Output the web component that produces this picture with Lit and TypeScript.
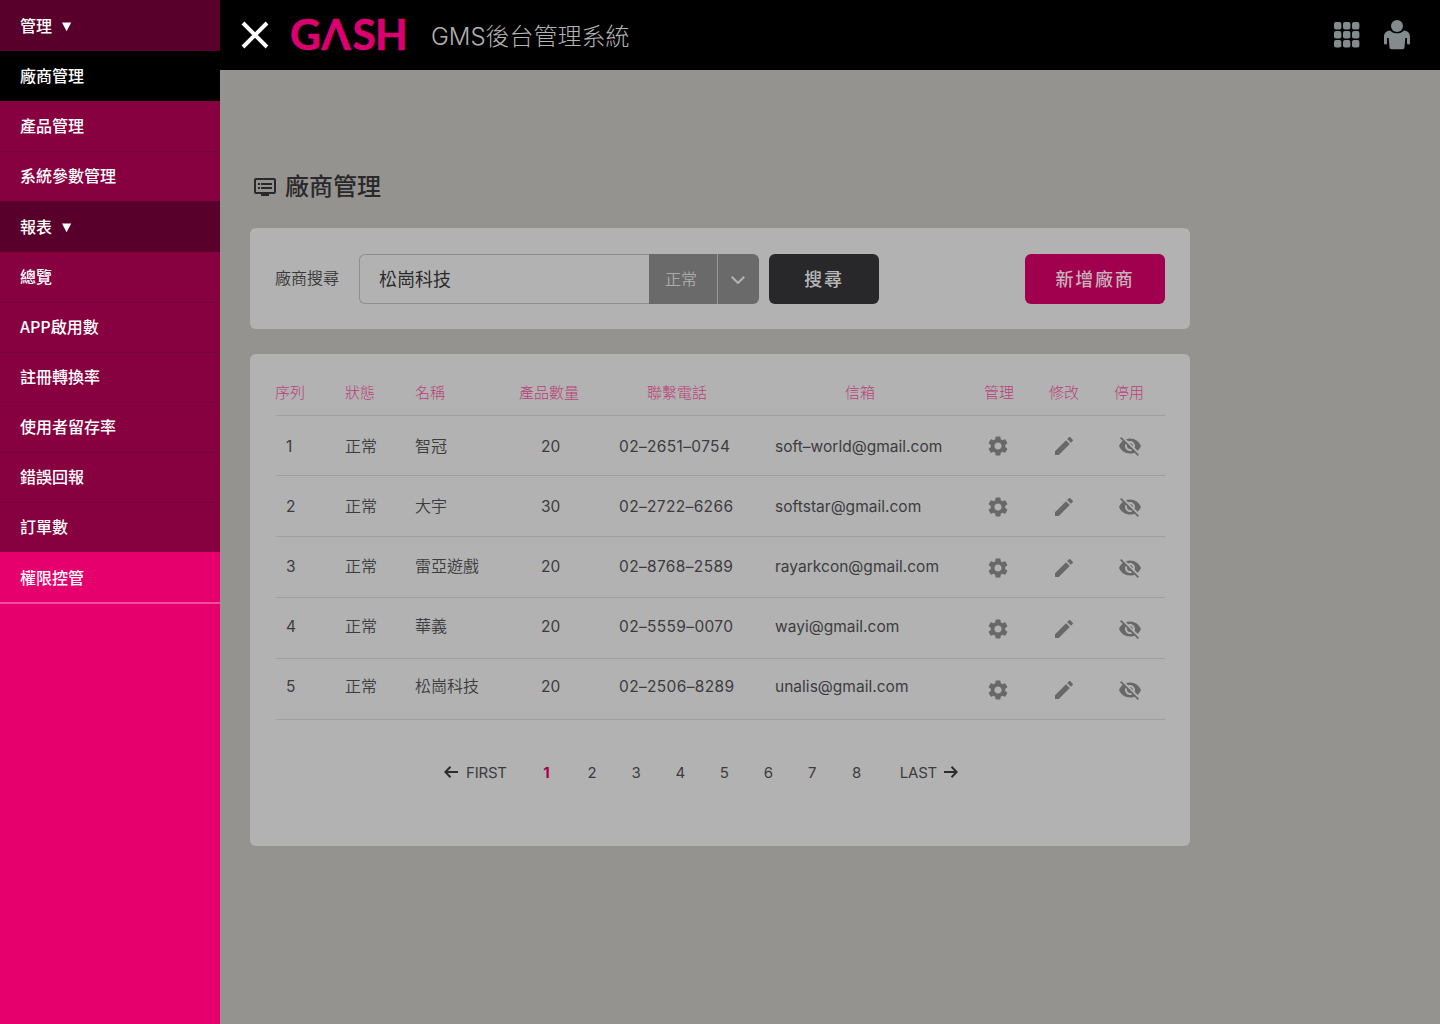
import { LitElement, html, css, svg } from "lit";
import { customElement } from "lit/decorators.js";
import { classMap } from "lit/directives/class-map.js";

const GEAR = "M19.14 12.94c.04-.3.06-.61.06-.94 0-.32-.02-.64-.07-.94l2.03-1.58a.49.49 0 0 0 .12-.61l-1.92-3.32a.488.488 0 0 0-.59-.22l-2.39.96c-.5-.38-1.03-.7-1.62-.94l-.36-2.54a.484.484 0 0 0-.48-.41h-3.84c-.24 0-.43.17-.47.41l-.36 2.54c-.59.24-1.13.57-1.62.94l-2.39-.96c-.22-.08-.47 0-.59.22L2.74 8.87c-.12.21-.08.47.12.61l2.03 1.58c-.05.3-.09.63-.09.94s.02.64.07.94l-2.03 1.58a.49.49 0 0 0-.12.61l1.92 3.32c.12.22.37.29.59.22l2.39-.96c.5.38 1.03.7 1.62.94l.36 2.54c.05.24.24.41.48.41h3.84c.24 0 .44-.17.47-.41l.36-2.54c.59-.24 1.13-.56 1.62-.94l2.39.96c.22.08.47 0 .59-.22l1.92-3.32c.12-.22.07-.47-.12-.61l-2.01-1.58zM12 15.6c-1.98 0-3.6-1.62-3.6-3.6s1.62-3.6 3.6-3.6 3.6 1.62 3.6 3.6-1.62 3.6-3.6 3.6z";
const PENCIL = "M3 17.25V21h3.75L17.81 9.94l-3.75-3.75L3 17.25zM20.71 7.04a.996.996 0 0 0 0-1.41l-2.34-2.34a.996.996 0 0 0-1.41 0l-1.83 1.83 3.75 3.75 1.83-1.83z";
const EYE_OFF = "M12 7c2.76 0 5 2.24 5 5 0 .65-.13 1.26-.36 1.83l2.92 2.92c1.51-1.26 2.7-2.89 3.43-4.75-1.73-4.39-6-7.5-11-7.5-1.4 0-2.74.25-3.98.7l2.16 2.16C10.74 7.13 11.35 7 12 7zM2 4.27l2.28 2.28.46.46C3.08 8.3 1.78 10.02 1 12c1.73 4.39 6 7.5 11 7.5 1.55 0 3.03-.3 4.38-.84l.42.42L19.73 22 21 20.73 3.27 3 2 4.27zM7.53 9.8l1.55 1.55c-.05.21-.08.43-.08.65 0 1.66 1.34 3 3 3 .22 0 .44-.03.65-.08l1.55 1.55c-.67.33-1.41.53-2.2.53-2.76 0-5-2.24-5-5 0-.79.2-1.53.53-2.2zm4.31-.78l3.15 3.15.02-.16c0-1.66-1.34-3-3-3l-.17.01z";

const MENU = [
  { label: "管理", kind: "head" },
  { label: "廠商管理", kind: "active" },
  { label: "產品管理", kind: "sub" },
  { label: "系統參數管理", kind: "sub" },
  { label: "報表", kind: "head" },
  { label: "總覽", kind: "sub" },
  { label: "APP啟用數", kind: "sub" },
  { label: "註冊轉換率", kind: "sub" },
  { label: "使用者留存率", kind: "sub" },
  { label: "錯誤回報", kind: "sub" },
  { label: "訂單數", kind: "sub" },
  { label: "權限控管", kind: "root" },
];

const ROWS = [
  ["1", "正常", "智冠", "20", "02–2651–0754", "soft–world@gmail.com"],
  ["2", "正常", "大宇", "30", "02–2722–6266", "softstar@gmail.com"],
  ["3", "正常", "雷亞遊戲", "20", "02–8768–2589", "rayarkcon@gmail.com"],
  ["4", "正常", "華義", "20", "02–5559–0070", "wayi@gmail.com"],
  ["5", "正常", "松崗科技", "20", "02–2506–8289", "unalis@gmail.com"],
];

const icon = (d: string) => html`<svg class="icon" viewBox="0 0 24 24"><path d=${d}></path></svg>`;

@customElement("side-menu")
class SideMenu extends LitElement {
  static styles = css`
    :host { display: block; width: 220px; height: 1024px; background: #e6006e; }
    .item {
      box-sizing: border-box; height: 50px; padding: 0 20px 2px; display: flex; align-items: center;
      color: #fff; font-size: 16px; font-weight: 500; line-height: 24px;
    }
    .head { background: #58002b; height: 51px; }
    .active { background: #000; }
    .sub { background: #87003f; }
    .sub + .sub { border-top: 1px solid #7c003a; padding-bottom: 3px; }
    .root { height: 52px; padding-bottom: 0; border-bottom: 2px solid #f04c98; }
    .arrow { width: 10px; height: 10px; margin: 4px 0 0 10px; fill: #fff; }
  `;
  render() {
    return html`<nav>${MENU.map((m) => html`
      <div class=${classMap({ item: true, [m.kind]: true })}>
        <span>${m.label}</span>
        ${m.kind === "head" ? html`<svg class="arrow" viewBox="0 0 10 10"><path d="M0 .5H9.200L4.600 9.200Z"></path></svg>` : ""}
      </div>`)}</nav>`;
  }
}

@customElement("top-bar")
class TopBar extends LitElement {
  static styles = css`
    :host { display: flex; align-items: center; height: 70px; background: #000; }
    .close { width: 28px; height: 28px; margin-left: 21px; stroke: #fff; stroke-width: 4; }
    .logo { width: 118px; height: 40px; margin-left: 22px; margin-top: 2px; overflow: visible; }
    .logo text { font-family: Lato, "Liberation Sans", sans-serif; font-size: 42.500px; font-weight: 700; fill: #db0070; stroke: #db0070; stroke-width: .6; }
    .title { margin-left: 22px; padding-top: 3px; font-family: Inter, "Noto Sans CJK TC", sans-serif; font-size: 24px; font-weight: 300; line-height: 36px; color: #b2b2b2; white-space: nowrap; }
    .grid { width: 26px; height: 26px; margin-left: auto; fill: #838b8c; }
    .user { width: 28px; height: 30px; margin: 0 29px 0 23px; fill: #838b8c; }
  `;
  render() {
    const cells = [0, 9, 18];
    return html`
      <svg class="close" viewBox="0 0 28 28"><path d="M2 2 26 26M26 2 2 26"></path></svg>
      <svg class="logo" viewBox="0 0 118 40"><text x="-1 30.200 61.500 84" y="34">GΛSH</text></svg>
      <span class="title">GMS後台管理系統</span>
      <svg class="grid" viewBox="0 0 26 26">
        ${cells.map((y) => cells.map((x) => svg`<rect x=${x} y=${y} width="7.4" height="7.4" rx="2"></rect>`))}
      </svg>
      <svg class="user" viewBox="0 0 28 30">
        <circle cx="14" cy="6" r="6"></circle>
        <path d="M7 10.500C2.700 11 1 13.500 1 17V23.500Q1 24.500 2.400 24.500T4 23.500V18H5.700L6.500 27.500Q6.700 29.200 8.500 29.200H19.500Q21.300 29.200 21.500 27.500L22.300 18H24V23.500Q24 24.500 25.600 24.500T27 23.500V17C27 13.500 25.300 11 21 10.500C17.500 14.300 10.500 14.300 7 10.500Z"></path>
      </svg>`;
  }
}

@customElement("vendor-search")
class VendorSearch extends LitElement {
  static styles = css`
    :host { box-sizing: border-box; display: flex; align-items: center; height: 101px; padding: 0 25px; background: #b2b2b2; border-radius: 6px; color: #38383a; }
    .label { width: 84px; font-size: 16px; font-weight: 350; line-height: 24px; margin-top: -4px; }
    .field { box-sizing: border-box; width: 290px; height: 50px; padding-left: 19px; border: 1px solid #8e8e8e; border-right: 0; border-radius: 6px 0 0 6px; font-size: 18px; line-height: 47px; color: #2a2a2c; }
    .state { width: 68px; height: 50px; background: #6a6a6a; color: #aaa; font-size: 16px; font-weight: 350; line-height: 48px; text-indent: 16px; }
    .drop { box-sizing: border-box; width: 42px; height: 50px; border-left: 1px solid #999; background: #6a6a6a; border-radius: 0 6px 6px 0; display: flex; align-items: center; justify-content: center; }
    .chevron { width: 14px; height: 8px; margin: 3px 1px 0 0; fill: none; stroke: #b2b2b2; stroke-width: 2; }
    .btn { height: 50px; border-radius: 6px; font-size: 18px; font-weight: 500; line-height: 49px; letter-spacing: 1.800px; text-align: center; color: #b8b8b8; }
    .dark { width: 110px; margin-left: 10px; background: #28282a; }
    .pink { width: 140px; margin-left: auto; background: #a0004d; color: #c8b0bc; }
  `;
  render() {
    return html`
      <span class="label">廠商搜尋</span>
      <div class="field">松崗科技</div>
      <div class="state">正常</div>
      <div class="drop"><svg class="chevron" viewBox="0 0 14 8"><path d="M.7 .7 7 7 13.300 .7"></path></svg></div>
      <div class="btn dark">搜尋</div>
      <div class="btn pink">新增廠商</div>`;
  }
}

@customElement("vendor-table")
class VendorTable extends LitElement {
  static styles = css`
    :host { box-sizing: border-box; display: block; height: 492px; padding: 0 25px; background: #b2b2b2; border-radius: 6px; color: #3c3c3e; }
    .row { box-sizing: border-box; height: 61px; display: grid; grid-template-columns: 70px 70px 104px 100px 156px 198px 66px 66px 60px; align-items: center; border-bottom: 1px solid #9f9f9f; font-size: 16px; line-height: 24px; font-weight: 350; margin-left: 1px; }
    .row > * { margin-left: -1px; white-space: nowrap; }
    .header { height: 62px; padding-top: 14px; color: #b84078; font-size: 15px; font-weight: 300; }
    .header .c4 { padding-left: 28px; }
    .header .c5 { padding-left: 70px; }
    .header .c6 { padding-left: 11px; }
    .header .c7 { padding-left: 10px; }
    .header .c8 { padding-left: 9px; }
    .body .text { padding-bottom: 2px; }
    .body .c0 { padding-left: 11px; }
    .body .c3 { padding-left: 22px; }
    .body .latin { font-family: Inter, "Noto Sans CJK TC", sans-serif; font-weight: 380; font-size: 15.500px; padding-top: 3px; }
    .body .c4 { letter-spacing: .35px; }
    .body .c5 { letter-spacing: .02px; }
    .r0 { height: 60px; }
    .r0 .text { padding-bottom: 1px; }
    .r2 .text { padding-bottom: 4px; }
    .r3 .text { padding-bottom: 6px; }
    .r4 .text { padding-bottom: 8px; }
    .icon { width: 24px; height: 24px; margin-top: 2px; fill: #686868; }
    .row > .icon { margin-left: 11px; padding-left: 1px; }
    .r0 .icon { margin-top: 0; }
    .pager { display: flex; align-items: center; margin: 40px 0 0 169px; height: 24px; font-family: Inter, "Liberation Sans", sans-serif; font-size: 15px; font-weight: 380; }
    .arrow { width: 14px; height: 12px; margin-top: -1px; fill: none; stroke: #2c2c2e; stroke-width: 2; }
    .first { margin: 0 36px 0 8px; width: 42px; letter-spacing: -.2px; }
    .last { margin: 0 6px 0 3px; width: 38px; letter-spacing: -.2px; }
    .num { width: 44.100px; margin-left: -.7px; margin-right: .7px; }
    .current { color: #a8004f; font-weight: 700; }
  `;
  render() {
    const heads = ["序列", "狀態", "名稱", "產品數量", "聯繫電話", "信箱", "管理", "修改", "停用"];
    return html`
      <div class="row header">${heads.map((h, i) => html`<span class=${"c" + i}>${h}</span>`)}</div>
      ${ROWS.map((r, ri) => html`<div class=${"row body r" + ri}>
        ${r.map((t, i) => html`<span class=${classMap({ text: true, ["c" + i]: true, latin: i === 0 || i > 2 })}>${t}</span>`)}
        ${icon(GEAR)}${icon(PENCIL)}${icon(EYE_OFF)}
      </div>`)}
      <div class="pager">
        <svg class="arrow" viewBox="0 0 14 12"><path d="M14 6H1.500M6.500 .8 1.300 6 6.500 11.200"></path></svg>
        <span class="first">FIRST</span>
        ${[1, 2, 3, 4, 5, 6, 7, 8].map((n) => html`<span class=${classMap({ num: true, current: n === 1 })}>${n}</span>`)}
        <span class="last">LAST</span>
        <svg class="arrow" viewBox="0 0 14 12"><path d="M0 6H12.500M7.500 .8 12.700 6 7.500 11.200"></path></svg>
      </div>`;
  }
}

@customElement("app-root")
class AppRoot extends LitElement {
  static styles = css`
    :host { display: flex; width: 1440px; height: 1024px; overflow: hidden; background: #949390; font-family: "Noto Sans CJK TC", "Noto Sans", sans-serif; }
    .main { flex: 1; }
    .content { width: 940px; padding: 99px 0 0 30px; }
    .heading { display: flex; align-items: center; height: 36px; margin-bottom: 23px; padding-left: 3px; font-size: 24px; font-weight: 500; line-height: 36px; color: #29292b; }
    .heading span { padding-bottom: 4px; }
    .board { width: 24px; height: 24px; margin-right: 8px; fill: #29292b; }
    .table { margin-top: 25px; }
  `;
  render() {
    return html`
      <side-menu></side-menu>
      <div class="main">
        <top-bar></top-bar>
        <div class="content">
          <div class="heading">
            <svg class="board" viewBox="0 0 24 24"><path d="M21 3H3c-1.100 0-2 .9-2 2v12c0 1.100.9 2 2 2h5v2h8v-2h5c1.100 0 1.990-.9 1.990-2L23 5c0-1.100-.9-2-2-2zm0 14H3V5h18v12zm-2-9H8v2h11V8zm0 4H8v2h11v-2zM7 8H5v2h2V8zm0 4H5v2h2v-2z"></path></svg>
            <span>廠商管理</span>
          </div>
          <vendor-search></vendor-search>
          <vendor-table class="table"></vendor-table>
        </div>
      </div>`;
  }
}
